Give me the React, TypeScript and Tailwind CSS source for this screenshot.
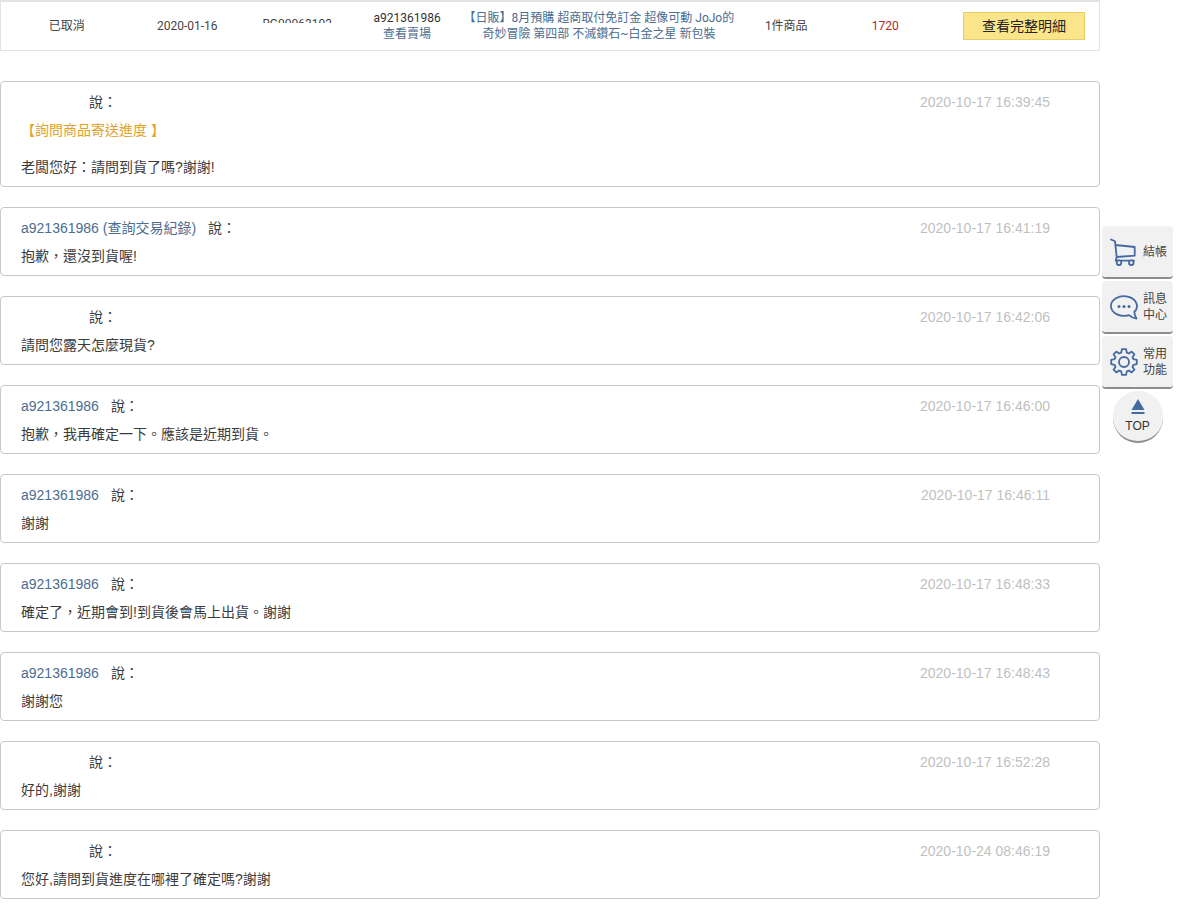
import type { ReactNode } from "react";

type Message = {
  author?: string;
  time: string;
  topic?: string;
  body: string;
};

const messages: Message[] = [
  { time: "2020-10-17 16:39:45", topic: "【詢問商品寄送進度 】", body: "老闆您好：請問到貨了嗎?謝謝!" },
  { author: "a921361986 (查詢交易紀錄)", time: "2020-10-17 16:41:19", body: "抱歉，還沒到貨喔!" },
  { time: "2020-10-17 16:42:06", body: "請問您露天怎麼現貨?" },
  { author: "a921361986", time: "2020-10-17 16:46:00", body: "抱歉，我再確定一下。應該是近期到貨。" },
  { author: "a921361986", time: "2020-10-17 16:46:11", body: "謝謝" },
  { author: "a921361986", time: "2020-10-17 16:48:33", body: "確定了，近期會到!到貨後會馬上出貨。謝謝" },
  { author: "a921361986", time: "2020-10-17 16:48:43", body: "謝謝您" },
  { time: "2020-10-17 16:52:28", body: "好的,謝謝" },
  { time: "2020-10-24 08:46:19", body: "您好,請問到貨進度在哪裡了確定嗎?謝謝" },
];

function OrderTable() {
  return (
    <table className="w-full table-fixed border-collapse border border-t-2 border-[#e3e3e3] text-center font-[Roboto,'Noto_Sans_CJK_TC',sans-serif] text-xs leading-4 text-[#444]">
      <colgroup>
        <col className="w-[12%]" />
        <col className="w-[10%]" />
        <col className="w-[10%]" />
        <col className="w-[10%]" />
        <col className="w-[26%]" />
        <col className="w-[7%]" />
        <col className="w-[11%]" />
        <col className="w-[14%]" />
      </colgroup>
      <tbody>
        <tr className="h-[49px]">
          <td>已取消</td>
          <td>2020-01-16</td>
          <td className="pb-2.5">
            <span className="block h-1 overflow-hidden leading-[10px]">RG00063103</span>
          </td>
          <td>
            <div className="text-[#333]">a921361986</div>
            <a href="#store" className="block text-[#4a6d90]">查看賣場</a>
          </td>
          <td className="pr-3">
            <a href="#item" className="block whitespace-nowrap text-[#4a6d90]">
              【日販】8月預購 超商取付免訂金 超像可動 JoJo的
              <br />
              奇妙冒險 第四部 不滅鑽石~白金之星 新包裝
            </a>
          </td>
          <td>1件商品</td>
          <td className="text-[#b8252b]">1720</td>
          <td>
            <button type="button" className="ml-auto mr-[14px] block h-7 w-[122px] border border-[#e6cf6a] bg-[#fbe58a] text-sm text-[#222]">
              查看完整明細
            </button>
          </td>
        </tr>
      </tbody>
    </table>
  );
}

function MessageCard({ author, time, topic, body }: Message) {
  return (
    <article className="rounded border border-[#c8c8c8] px-5 pt-1.5 pb-[5px] text-sm leading-7 text-[#3c3c3c]">
      <header className="flex justify-between pr-[29px]">
        <div className="flex gap-3">
          {author ? <a href="#member" className="text-[#4a6d90]">{author}</a> : <span className="w-14" />}
          <span>說：</span>
        </div>
        <time className="text-[#bfbfbf]">{time}</time>
      </header>
      {topic && <p className="mb-[9px] text-[#dfa22c]">{topic}</p>}
      <p>{body}</p>
    </article>
  );
}

function CartIcon() {
  return (
    <svg className="shrink-0" width="28" height="28" viewBox="0 0 28 28" fill="none" stroke="#456a9f" strokeWidth="1.8" strokeLinejoin="round" strokeLinecap="round" aria-hidden="true">
      <path d="M1 1.500 5 3.300 6.700 19M5.500 7 24.700 9v8.700L6.700 19 5.700 22.700H24" />
      <circle cx="9" cy="24.700" r="2.300" fill="#f1f1f1" />
      <circle cx="21.300" cy="24.700" r="2.300" fill="#f1f1f1" />
    </svg>
  );
}

function ChatIcon() {
  return (
    <svg className="shrink-0" width="28" height="28" viewBox="0 0 28 28" fill="none" stroke="#456a9f" strokeWidth="1.8" strokeLinejoin="round" aria-hidden="true">
      <path d="M19 22.100A13 9.800 0 1 1 24.300 19Q24.600 22.500 26.500 25.500Q22 25 19 22.100Z" />
      <g fill="#456a9f" stroke="none">
        <circle cx="9" cy="13.500" r="1.500" />
        <circle cx="14" cy="13.500" r="1.500" />
        <circle cx="19" cy="13.500" r="1.500" />
      </g>
    </svg>
  );
}

function GearIcon() {
  return (
    <svg className="shrink-0" width="28" height="28" viewBox="0 0 28 28" fill="none" stroke="#456a9f" strokeWidth="1.8" strokeLinejoin="round" aria-hidden="true">
      <path d="M16.100 1.200 16.800 4.600 18.900 5.500 21.600 3.600 24.400 6.400 22.500 9.100 23.400 11.200 26.800 11.900V16.100L23.400 16.800 22.500 18.900 24.400 21.600 21.600 24.400 18.900 22.500 16.800 23.400 16.100 26.800H11.900L11.200 23.400 9.100 22.500 6.400 24.400 3.600 21.600 5.500 18.900 4.600 16.800 1.200 16.100V11.900L4.600 11.200 5.500 9.100 3.600 6.400 6.400 3.600 9.100 5.500 11.200 4.600 11.900 1.200Z" />
      <circle cx="14" cy="14" r="5" />
    </svg>
  );
}

function SideButton({ icon, children }: { icon: ReactNode; children: ReactNode }) {
  return (
    <button type="button" className="flex h-[53px] w-full items-center gap-[5px] rounded border-b-2 border-[#8c8c8c] bg-[#f1f1f1] pl-2 text-left text-xs leading-4 text-[#444]">
      {icon}
      <span>{children}</span>
    </button>
  );
}

export default function App() {
  return (
    <div className="flex bg-white font-['Liberation_Sans','Noto_Sans_CJK_TC',sans-serif]">
      <main className="min-w-0 flex-1">
        <OrderTable />
        <section className="mt-[30px] flex flex-col gap-5 pb-2.5">
          {messages.map((message) => (
            <MessageCard key={message.time} {...message} />
          ))}
        </section>
      </main>
      <aside className="flex w-[77px] shrink-0 flex-col items-center gap-0.5 pt-[226px] pr-1 pl-0.5">
        <SideButton icon={<CartIcon />}>結帳</SideButton>
        <SideButton icon={<ChatIcon />}>訊息<br />中心</SideButton>
        <SideButton icon={<GearIcon />}>常用<br />功能</SideButton>
        <a href="#top" className="flex h-[52px] w-[50px] flex-col items-center gap-1 rounded-full border-b-2 border-[#8c8c8c] bg-[#f1f1f1] pt-2 text-xs leading-4 text-[#333]">
          <svg className="shrink-0" width="14" height="15" viewBox="0 0 14 15" fill="#456a9f" aria-hidden="true">
            <path d="M7 0 13.500 11H.5zM.5 13h13v2H.5z" />
          </svg>
          TOP
        </a>
      </aside>
    </div>
  );
}
